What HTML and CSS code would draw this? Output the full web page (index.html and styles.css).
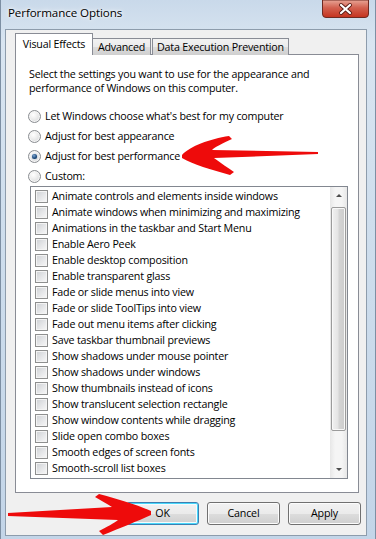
FILE: index.html
```html
<html lang="en">
<head>
    <meta charset="UTF-8">
    <title>Performance Options</title>
    <link rel="stylesheet" href="styles.css">
</head>
<body>
<div class="window">
    <div class="titlebar">
        <span class="title">Performance Options</span>
        <div class="close">
            <svg width="47" height="18" viewBox="0 0 47 18">
                <defs>
                    <linearGradient id="red" x1="0" y1="0" x2="0" y2="1">
                        <stop offset="0" stop-color="#e8a596"/>
                        <stop offset="0.45" stop-color="#d2604f"/>
                        <stop offset="1" stop-color="#c4321e"/>
                    </linearGradient>
                </defs>
                <path d="M0.5,0 L0.5,14 Q0.5,17.5 4,17.5 L43,17.5 Q46.5,17.5 46.5,14 L46.5,0 Z" fill="url(#red)" stroke="#6e2a22"/>
                <path d="M19,5 L28,13 M28,5 L19,13" stroke="#5a1d16" stroke-width="4" stroke-linecap="round"/>
                <path d="M19,5 L28,13 M28,5 L19,13" stroke="#ffffff" stroke-width="2.2" stroke-linecap="round"/>
            </svg>
        </div>
    </div>

    <div class="client">
        <div class="tabs">
            <div class="tab active">Visual Effects</div>
            <div class="tab adv">Advanced</div>
            <div class="tab dep">Data Execution Prevention</div>
        </div>

        <div class="panel">
            <p class="intro">Select the settings you want to use for the appearance and<br>performance of Windows on this computer.</p>

            <div class="radios">
                <div class="radio"><span class="circle"></span>Let Windows choose what's best for my computer</div>
                <div class="radio"><span class="circle"></span>Adjust for best appearance</div>
                <div class="radio"><span class="circle checked"></span>Adjust for best performance</div>
                <div class="radio"><span class="circle"></span>Custom:</div>
            </div>

            <div class="listbox">
                <ul class="items">
                    <li><span class="box"></span>Animate controls and elements inside windows</li>
                    <li><span class="box"></span>Animate windows when minimizing and maximizing</li>
                    <li><span class="box"></span>Animations in the taskbar and Start Menu</li>
                    <li><span class="box"></span>Enable Aero Peek</li>
                    <li><span class="box"></span>Enable desktop composition</li>
                    <li><span class="box"></span>Enable transparent glass</li>
                    <li><span class="box"></span>Fade or slide menus into view</li>
                    <li><span class="box"></span>Fade or slide ToolTips into view</li>
                    <li><span class="box"></span>Fade out menu items after clicking</li>
                    <li><span class="box"></span>Save taskbar thumbnail previews</li>
                    <li><span class="box"></span>Show shadows under mouse pointer</li>
                    <li><span class="box"></span>Show shadows under windows</li>
                    <li><span class="box"></span>Show thumbnails instead of icons</li>
                    <li><span class="box"></span>Show translucent selection rectangle</li>
                    <li><span class="box"></span>Show window contents while dragging</li>
                    <li><span class="box"></span>Slide open combo boxes</li>
                    <li><span class="box"></span>Smooth edges of screen fonts</li>
                    <li><span class="box"></span>Smooth-scroll list boxes</li>
                </ul>
                <div class="scrollbar">
                    <div class="sb-arrow"><span class="tri up"></span></div>
                    <div class="track"><div class="thumb"></div></div>
                    <div class="sb-arrow"><span class="tri down"></span></div>
                </div>
            </div>
        </div>

        <div class="buttons">
            <div class="btn default">OK</div>
            <div class="btn">Cancel</div>
            <div class="btn">Apply</div>
        </div>
    </div>
</div>

<!-- red hand-drawn arrows painted over the screenshot -->
<svg class="marks" width="376" height="539" viewBox="0 0 376 539">
    <path d="M182,155 C190,146 210,139 229,136 L232,139 C223,143 215,147 212,150 L318,152 L318,154 L214,158 C221,163 228,168 234,172 L230,175 C212,170 192,164 182,158 Z" fill="#ee0b0b"/>
    <path d="M8,513 L112,507 C106,503 100,500 95,497 L99,494 C118,499 138,505 151,511 L151,515 C138,521 120,528 103,535 L99,531 C107,527 114,523 118,520 L8,516 Z" fill="#ee0b0b"/>
</svg>
</body>
</html>
```

FILE: styles.css
```css
body {
    margin: 0;
    font-family: "Open Sans", "Noto Sans", sans-serif;
    font-size: 10.7px;
    letter-spacing: -0.2px;
    color: #000;
}

.window {
    position: relative;
    width: 376px;
    height: 539px;
    box-sizing: border-box;
    padding: 0 8px 3px 4px;
    background: linear-gradient(180deg, #c9d9ea 0%, #d9e5f1 8%, #cfdeed 40%, #c3d5e8 100%);
    border-left: 1px solid #7d8fa3;
    border-right: 1px solid #7d8fa3;
    display: flex;
    flex-direction: column;
}

.titlebar {
    height: 29px;
    display: flex;
    justify-content: space-between;
    align-items: flex-start;
}

.title {
    margin: 5px 0 0 3px;
    font-size: 11.6px;
    letter-spacing: -0.1px;
    text-shadow: 0 0 6px #fff, 0 0 3px #fff;
}

.close {
    margin-right: -2px;
    height: 18px;
}

.client {
    flex: 1;
    border: 1px solid #8d9cac;
    background: #f0f0f0;
    padding: 4px 7px 0 9px;
    display: flex;
    flex-direction: column;
}

.tabs {
    display: flex;
    align-items: flex-end;
    height: 21px;
    margin-bottom: -1px;
    position: relative;
    z-index: 1;
}

.tab {
    box-sizing: border-box;
    height: 17px;
    border: 1px solid #898c95;
    border-bottom: none;
    background: linear-gradient(180deg, #f2f2f2 0%, #ebebeb 50%, #dddddd 51%, #cfcfcf 100%);
    text-align: center;
    line-height: 16px;
    white-space: nowrap;
}

.tab.active {
    width: 78px;
    height: 22px;
    background: #fff;
    line-height: 20px;
}

.tab.adv {
    width: 58px;
    border-left: none;
}

.tab.dep {
    width: 137px;
    margin-left: 1px;
}

.panel {
    height: 439px;
    box-sizing: border-box;
    border: 1px solid #898c95;
    background: #fff;
    padding: 12px 10px 0 12px;
}

.intro {
    margin: 0;
    line-height: 14px;
    padding-left: 1px;
}

.radios {
    margin-top: 11px;
}

.radio {
    height: 20px;
    display: flex;
    align-items: center;
    white-space: nowrap;
}

.circle {
    width: 11px;
    height: 11px;
    border: 1px solid #8a8d91;
    border-radius: 50%;
    margin-right: 4px;
    background: radial-gradient(circle at 40% 35%, #ffffff 0%, #f0f0f0 35%, #cfd1d4 100%);
    box-shadow: inset 0 0 0 1px #f6f6f6;
    display: flex;
    align-items: center;
    justify-content: center;
}

.circle.checked::after {
    content: "";
    width: 5px;
    height: 5px;
    border-radius: 50%;
    background: radial-gradient(circle at 40% 35%, #7fa6d2 0%, #1d4b7e 55%, #0b2a4c 100%);
    box-shadow: 0 0 1px #2d5a8c;
}

.listbox {
    margin: 0 0 0 2px;
    height: 293px;
    box-sizing: border-box;
    border: 1px solid #828790;
    display: flex;
}

.items {
    flex: 1;
    list-style: none;
    margin: 0;
    padding: 1px 0 0 4px;
}

.items li {
    height: 16px;
    display: flex;
    align-items: center;
    white-space: nowrap;
}

.box {
    width: 11px;
    height: 11px;
    border: 1px solid #8e8f8f;
    margin-right: 4px;
    background: linear-gradient(135deg, #cdd0d4 0%, #e6e7e9 55%, #f8f8f8 100%);
    box-shadow: inset 0 0 0 1px #f4f4f4;
}

.scrollbar {
    width: 17px;
    display: flex;
    flex-direction: column;
    background: linear-gradient(90deg, #e7e7e7 0%, #f5f5f5 30%, #f5f5f5 70%, #e7e7e7 100%);
}

.sb-arrow {
    height: 17px;
    display: flex;
    align-items: center;
    justify-content: center;
}

.tri {
    width: 0;
    height: 0;
    border-left: 3px solid transparent;
    border-right: 3px solid transparent;
}

.tri.up {
    border-bottom: 3px solid #4d4d4d;
}

.tri.down {
    border-top: 3px solid #4d4d4d;
}

.track {
    flex: 1;
    padding: 3px 1px 0 1px;
}

.thumb {
    height: 224px;
    box-sizing: border-box;
    border: 1px solid #9b9b9b;
    border-radius: 2px;
    background: linear-gradient(90deg, #f1f1f1 0%, #e4e4e4 45%, #d4d4d4 55%, #cccccc 100%);
    box-shadow: inset 0 0 0 1px #f8f8f8;
}

.buttons {
    display: flex;
    justify-content: flex-end;
    gap: 8px;
    margin: 9px -2px 0 0;
}

.btn {
    width: 73px;
    height: 23px;
    box-sizing: border-box;
    border: 1px solid #707070;
    border-radius: 3px;
    background: linear-gradient(180deg, #f2f2f2 0%, #ebebeb 50%, #dddddd 51%, #cfcfcf 100%);
    box-shadow: inset 0 0 0 1px #fcfcfc;
    text-align: center;
    line-height: 21px;
}

.btn.default {
    border-color: #3c7fb1;
    box-shadow: inset 0 0 0 1px #48d7fb, inset 0 0 0 2px #f4fbfe;
}

.marks {
    position: absolute;
    top: 0;
    left: 0;
    pointer-events: none;
}
```
